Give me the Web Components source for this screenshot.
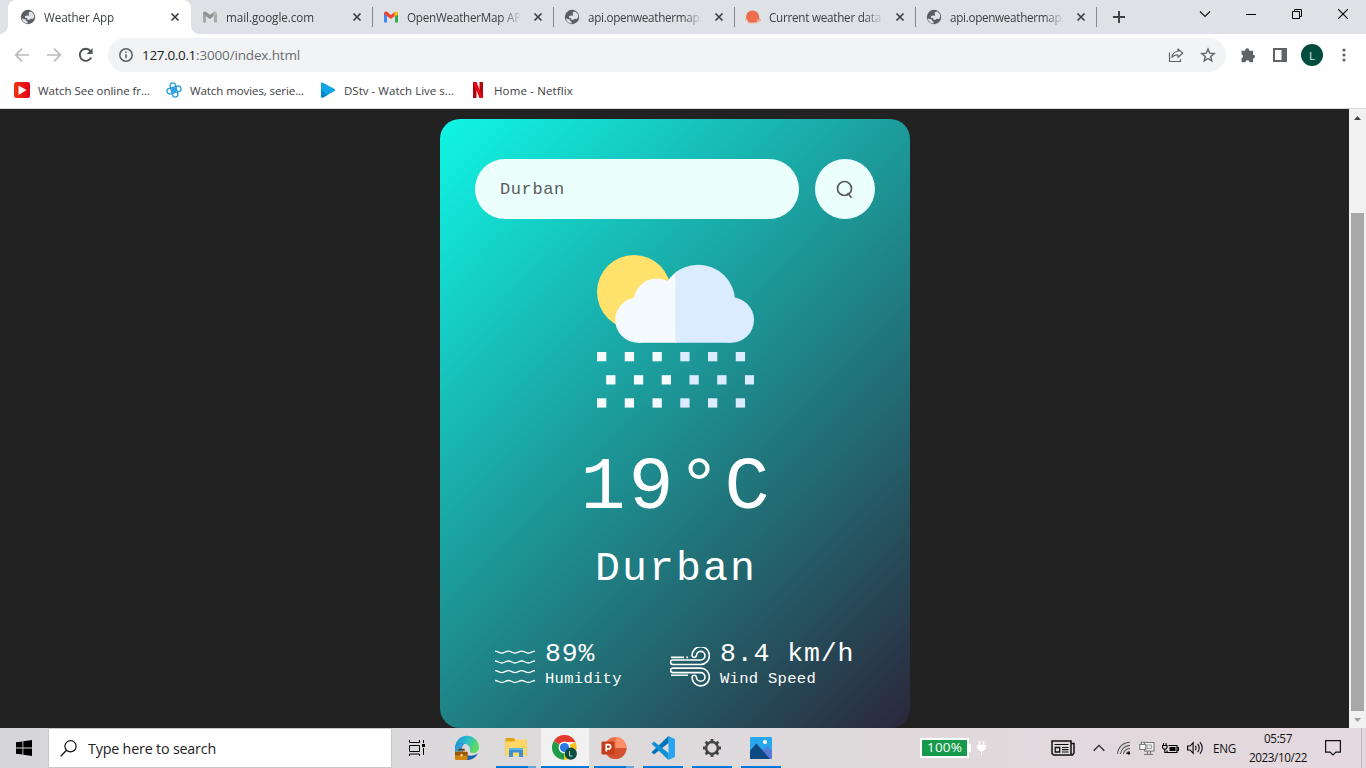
<!DOCTYPE html>
<html lang="en"><head><meta charset="utf-8"><title>Weather App</title>
<style>
html,body{margin:0;height:100%;overflow:hidden;background:#222}
body{font-family:"Open Sans","Noto Sans",sans-serif}
</style></head><body>
<desktop-screen></desktop-screen>
<script>
const def=(name,html,after)=>customElements.define(name,class extends HTMLElement{
  connectedCallback(){
    if(!this.shadowRoot){
      const t=document.createElement('template');
      t.innerHTML=typeof html==='function'?html(this):html;
      this.attachShadow({mode:'open'}).append(document.importNode(t.content,true));
    }
    if(after)after(this);
  }
});

const globe='<circle cx="8" cy="8" r="7.2" fill="#5a5e63"/><path d="M1.6 9.6c2 .2 2.7 1 4.300 .9l.2 1.300 1.600 1.200-.2 1.500c-3-.2-5.100-2-5.900-4.900zM8.700 3.200l2.300-.7c1.900 1 3.200 2.800 3.300 5.200l-1.300 2.200-2.500-.2-1.300 1.300-1.800-.2-.3-1.500-2.200-.6.2-1.800 2.200-.4 1.900.2-.4-1.300z" fill="#dfe2e6"/>';
const ICONS={
globe:[16,16,globe],
gmail:[16,16,'<path d="M1 4v9.500h3V7z" fill="#4285f4"/><path d="M12 7v6.500h3V4z" fill="#34a853"/><path d="M1 4.500C1 2.600 3 2 4.300 3L8 6l3.700-3v4L8 10 1 5z" fill="#ea4335"/><path d="M11.700 3C13 2 15 2.600 15 4.500V5.500l-3.300 2.300z" fill="#fbbc04"/>'],
gmailgray:[16,16,'<path d="M1 4v9.500h3V7z" fill="#a5a8a9"/><path d="M12 7v6.500h3V4z" fill="#aaa"/><path d="M1 4.500C1 2.600 3 2 4.300 3L8 6l3.700-3v4L8 10 1 5z" fill="#8f9191"/><path d="M11.700 3C13 2 15 2.600 15 4.500V5.500l-3.300 2.300z" fill="#b7b8b8"/>'],
owm:[16,16,'<path d="M1 8.500C1 4.500 3.500 1.600 7.500 1.600S14 4.500 14.200 8.500l-1 3-1.700 1.700H3.500L2 11z" fill="#ec6e4c"/><path d="M.3 10.200l2.500.8M3.500 13.600h8.500M11.500 11.500h1.500l1.200 1.500M14 9l1.600 3" fill="none" stroke="#f09c80" stroke-width="1.300"/>'],
close:[10,10,'<path d="M1.500 1.500l7 7M8.500 1.500l-7 7" stroke="#3c4043" stroke-width="1.700"/>'],
plus:[14,14,'<path d="M7 1v12M1 7h12" stroke="#3c4043" stroke-width="1.900"/>'],
down:[12,8,'<path d="M1 1.500l5 5 5-5" fill="none" stroke="#111" stroke-width="1.100"/>'],
min:[10,10,'<path d="M0 5.500h10" stroke="#000"/>'],
restore:[10,10,'<path d="M.5 2.500h7v7h-7zM2.500 2.500v-2h7v7h-2" fill="none" stroke="#000"/>'],
winx:[10,10,'<path d="M0 0l10 10M10 0L0 10" stroke="#000" stroke-width="1.100"/>'],
back:[16,16,'<path d="M15 8H2M8 1.700L1.700 8 8 14.300" fill="none" stroke="#b8babd" stroke-width="1.700"/>'],
fwd:[16,16,'<path d="M1 8h13M8 1.700L14.300 8 8 14.300" fill="none" stroke="#b8babd" stroke-width="1.700"/>'],
reload:[16,16,'<path d="M13.200 10.500A6 6 0 1 1 12.300 3.800L13.600 5" fill="none" stroke="#505458" stroke-width="1.900"/><path d="M14.600 1v6H8.600z" fill="#505458"/>'],
info:[16,16,'<circle cx="8" cy="8" r="6.200" fill="none" stroke="#5a5e63" stroke-width="1.500"/><path d="M8 7.200v4M8 4.500v1.500" stroke="#5a5e63" stroke-width="1.500"/>'],
share:[16,16,'<path d="M1.500 5.500v9h11v-2.300" fill="none" stroke="#5f6368" stroke-width="1.200"/><path d="M4 10.500c.4-4 3-6 6-6V2l4.700 4.200L10 10.300V8c-2.500-.2-4.600.5-6 2.500z" fill="none" stroke="#5f6368" stroke-width="1.200" stroke-linejoin="round"/>'],
star:[16,16,'<path d="M8 2l1.700 4.200 4.500.3-3.500 2.900 1.100 4.500L8 11.500l-3.800 2.400 1.100-4.500-3.500-2.900 4.500-.3z" fill="none" stroke="#5f6368" stroke-width="1.400"/>'],
puzzle:[16,16,'<path d="M1.500 3.800h3.800a2 2 0 1 1 3.800 0h4v3.900a1.900 1.900 0 1 1 0 3.800v3.700H9.500a2 2 0 0 0-4 0h-4v-4a2 2 0 0 0 0-3.900z" fill="#5f6368"/>'],
panel:[14,14,'<path d="M0 0h14v14H0zM2 2v10h6.500V2z" fill="#5f6368" fill-rule="evenodd"/>'],
dots:[4,14,'<g fill="#5f6368"><circle cx="2" cy="2" r="1.600"/><circle cx="2" cy="7" r="1.600"/><circle cx="2" cy="12" r="1.600"/></g>'],
play:[16,16,'<defs><linearGradient id="r"><stop stop-color="#f0320f"/><stop offset="1" stop-color="#e4001b"/></linearGradient></defs><rect width="16" height="16" rx="2.500" fill="url(#r)"/><path d="M4.500 3.500L12.500 8l-8 5z" fill="#fff"/>'],
knot:[16,16,'<g fill="none" stroke="#2a9de0" stroke-width="1.400" transform="rotate(-12 8 8)"><rect x="5" y=".8" width="5.600" height="8.400" rx="2.800"/><rect x="5.400" y="6.800" width="5.600" height="8.400" rx="2.800"/><rect x=".8" y="5.400" width="8.400" height="5.600" rx="2.800"/><rect x="6.800" y="5" width="8.400" height="5.600" rx="2.800"/></g>'],
dstv:[16,16,'<path d="M1 1.500C1 .3 2 .3 3 .700l11.500 6.300c1 .6 1 1.300 0 2L3 15.500c-1 .4-2 .2-2-1z" fill="#10a4e4"/><path d="M1 14V8l7 4.700-5 2.800c-1 .4-2 0-2-1.500z" fill="#0789c9"/>'],
netflix:[16,16,'<path d="M3 0h3.500v16H3zM9.500 0H13v16H9.500z" fill="#b1060f"/><path d="M3 0h3.500L13 16H9.500z" fill="#e50914"/>'],
search:[18,19,'<circle cx="8.500" cy="8.500" r="7" fill="none" stroke="#5a5a5a" stroke-width="1.700"/><path d="M11.500 13l4.200 4.700" stroke="#5a5a5a" stroke-width="1.700"/>'],
win:[16,16,'<path d="M0 2.300l6.500-.9v6.200H0zM7.300 1.200L16 0v7.600H7.300zM0 8.400h6.500v6.200L0 13.700zM7.300 8.400H16V16l-8.700-1.200z" fill="#000"/>'],
find:[17,17,'<circle cx="10.500" cy="6.300" r="5.600" fill="none" stroke="#111" stroke-width="1.200"/><path d="M6.500 10.300L.7 16.200" stroke="#111" stroke-width="1.300"/>'],
taskview:[16,16,'<path d="M.5 0v2.500h10V0M.5 5.500h10v6H.5zM.5 16v-2h10v2M14.500 0v3M14.500 8v7" fill="none" stroke="#000"/><path d="M13 4h3v3h-3z"/>'],
edge:[26,26,'<defs><linearGradient id="e" y2=".4"><stop stop-color="#1b86d0"/><stop offset=".5" stop-color="#29bdd2"/><stop offset="1" stop-color="#5edb62"/></linearGradient></defs><path d="M1 13a12 12 0 0 1 24-.5c0 3.500-3 5.500-6 5.500-2.500 0-3.500-1-3-2.500C17 12 13 8 8 9c-3 .5-6 2.500-7 4z" fill="url(#e)"/><path d="M1 14c0-4 5-7 9.500-5.500C6 11 8 18 13 20c4 1.500 8 .5 11-2-2 4.500-6 7-11 7C6 25 1 20 1 14z" fill="#1764ad"/><path d="M1 14c1-5 6-7 10-5.500-3 1.500-4 5-2 8L1.500 18z" fill="#2d9ddd"/><rect x="1" y="16.500" width="12.500" height="8.500" rx="1" fill="#cf850d"/><path d="M1 17h12.500v3.500H1z" fill="#9a570c"/><path d="M5 16v-1.500h5V16" fill="none" stroke="#6e3b0a" stroke-width="1.300"/><path d="M6.500 19h2v2.500h-2z" fill="#ffe194"/>'],
folder:[24,22,'<path d="M1.500 2.500C1.500 1 2 1 3 1h7l1.500 2H22.500v16H1.500z" fill="#e2a316"/><path d="M1.500 4.500h8.500l2-2h10.500V19h-21z" fill="#ffd765"/><path d="M5 11h14v9h-4v-4.500H9V20H5z" fill="#3c91d5"/><path d="M5 11h14v2H5z" fill="#64b2ea"/>'],
chrome:[26,26,'<path d="M12.500 12.500L1.700 6.200A12.300 12.300 0 0 1 23.500 7H12.500z" fill="#e33b2e"/><path d="M12.500 12.500L23.400 7A12.300 12.300 0 0 1 12 24.800z" fill="#fbc116"/><path d="M12.500 12.500L12 24.800A12.300 12.300 0 0 1 1.700 6.200z" fill="#229b49"/><circle cx="12.500" cy="12.500" r="5.900" fill="#fff"/><circle cx="12.500" cy="12.500" r="4.600" fill="#2878e8"/><circle cx="18.800" cy="18.700" r="6.100" fill="#0a4c40"/><path d="M17.500 16v5h3" stroke="#b5cec6" fill="none"/>'],
ppt:[26,24,'<circle cx="14.500" cy="12" r="11" fill="#ed6c47"/><path d="M14.500 1a11 11 0 0 1 11 11h-11z" fill="#ff8f6b"/><path d="M3.500 12h22a11 11 0 0 1-22 0z" fill="#d35230"/><rect x=".5" y="5.500" width="13" height="13" rx="1" fill="#c43e1c"/><path d="M5.300 15.500V8.700h2.300a2 2 0 0 1 0 4.200H5.300" stroke="#fff" stroke-width="1.700" fill="none"/>'],
code:[26,26,'<path d="M18.500 1L25 4v18l-6.500 3z" fill="#27a5ee"/><path d="M18.500 1v7L4 19.500l-2.500-2.300z" fill="#0072b8"/><path d="M18.500 25v-7L4 6.500 1.500 8.800z" fill="#1190d8"/>'],
gear:[20,20,'<circle cx="10" cy="10" r="5.900" fill="none" stroke="#444" stroke-width="2.500"/><g stroke="#444" stroke-width="2.800"><path d="M10 1v3M10 16v3M1 10h3M16 10h3M3.640 3.640l2.100 2.100M14.260 14.260l2.100 2.100M3.640 16.360l2.100-2.100M14.260 5.740l2.100-2.100"/></g>'],
photo:[22,22,'<rect width="22" height="22" rx="1" fill="#29a7ec"/><path d="M11 22l-2-6 8.500-6.500L22 13.500V22z" fill="#5a7ad8"/><path d="M0 13.500L6.500 6.500 20 22H0z" fill="#104a85"/><circle cx="15" cy="5" r="2.100" fill="#fff"/>'],
plug:[10,16,'<path d="M2.500 1v4M6.500 1v4" stroke="#fff" stroke-width="1.500"/><path d="M0 5h9v3L6.500 11H5v4H4v-4H2.500L0 8z" fill="#fff"/>'],
news:[24,16,'<path d="M1 1h19v14H2.500L1 13.500zM20 3.500h3V13l-1.500 2H19" fill="none" stroke="#111" stroke-width="1.500"/><path d="M3.500 4.500h14M11 7.500h6.500M11 9.700h6.500M11 12h6.500" stroke="#111" stroke-width="1.200"/><path d="M4.200 7.500h4.500v4.500H4.200z" fill="none" stroke="#111" stroke-width="1.300"/>'],
up:[12,8,'<path d="M.7 6.700L6 1.400l5.300 5.300" fill="none" stroke="#222" stroke-width="1.300"/>'],
wifi:[14,14,'<g fill="none" stroke="#555" stroke-width="1.100"><path d="M.6 13C1 6 6 1.500 13 1.200M3.500 13C4 8 8 4.600 13 4.400M6.500 13c.3-3 3-5.300 6.500-5.500M9.300 13c.4-1.500 1.700-2.400 3.700-2.500"/></g><circle cx="11.700" cy="12.300" r="1.400"/>'],
pc:[16,15,'<path d="M5.500 1.500h9.500v8.500H5.500zM8.500 10v3M11.500 10v3M5 13.500h9" fill="#f7f3f5" stroke="#777" stroke-width="1.100"/><path d="M8 4h4.500v3.500H8z" fill="#eee" stroke="#888" stroke-width=".8"/><path d="M.8 3.500h6v5h-6zM2.300 3.500V1.200h3v2.300" fill="#fff" stroke="#777" stroke-width="1.100"/>'],
batt:[17,13,'<path d="M6.500 3.500h8.500v7H5V8.500M15.500 5.500h1v3h-1" fill="none" stroke="#000" stroke-width="1.200"/><path d="M7.500 5h6v4h-6z"/><path d="M1.500 1v2M4 1v2M.5 3.500h4.500v2L4 7H1.500L.5 5.500zM2.800 7v3.500h2" fill="none" stroke="#000" stroke-width="1.100"/>'],
sound:[17,14,'<path d="M.6 5h2.500l3-3.300v10.600L3.100 9H.6z" fill="none" stroke="#000" stroke-width="1.100"/><path d="M8.300 4.800q1.500 2.200 0 4.400M10.700 2.900q3 4.100 0 8.200M13 1.200q4.500 5.800 0 11.600" fill="none" stroke="#111" stroke-width="1.100"/>'],
note:[16,16,'<path d="M.6 .6h14.800v11.500h-4.500L8 15l-2.900-2.900H.6z" fill="none" stroke="#111" stroke-width="1.200"/>'],
arrowup:[7,4,'<path d="M3.500 0L7 4H0z" fill="#444"/>'],
arrowdown:[7,4,'<path d="M3.500 4L7 0H0z" fill="#a0a0a0"/>'],
wave:[40,36,(()=>{let s='';for(const y of[3.3,13.2,22.800,32.700])s+=`<path d="M0 ${y-1.200}c3 0 4 2 6.700 2s4-2 6.700-2 4 2 6.600 2 4-2 6.700-2 4 2 6.600 2 4-2 6.700-2" fill="none" stroke="#fff" stroke-width="1.300"/>`;return s})()],
wind:[40,40,'<g fill="none" stroke="#fff" stroke-width="1.600"><path id="w" d="M2.800 13H30.700A4.300 4.300 0 1 0 26.400 8.700A2.300 2.300 0 0 1 22 8.700A8.700 8.900 0 1 1 30.700 17.500H2.800A2.200 2.200 0 0 1 2.800 13z"/><use href="#w" transform="matrix(1 0 0 -1 0 38.600)"/><path d="M1 10.400h13M16.300 10.400h1.800M1 28.200h17"/></g>'],
};
def('ui-icon',el=>{const[w,h,b]=ICONS[el.getAttribute('name')];
  return `<style>:host{display:block;flex:none;width:${w}px;height:${h}px}svg{display:block}</style><svg width="${w}" height="${h}" viewBox="0 0 ${w} ${h}">${b}</svg>`});

/* Text whose letter spacing is adjusted so that the run takes a given width. */
def('fit-text','<style>:host{display:block;white-space:pre}span{display:inline-block}</style><span><slot></slot></span>',el=>{
  const s=el.shadowRoot.querySelector('span'),w=+el.getAttribute('w'),n=el.textContent.length;
  if(w)s.style.letterSpacing=((w-s.getBoundingClientRect().width)/n)+'px';
});

def('browser-tab',el=>`<style>
:host{display:block;width:181px;height:34px;color:#3c4043}
:host([active]){width:183px;background:#fff;border-radius:8px 8px 0 0;position:relative}
:host([active])::before,:host([active])::after{content:"";position:absolute;bottom:0;width:8px;height:8px}
:host([active])::before{left:-8px;background:radial-gradient(circle at 0 0,transparent 7.5px,#fff 8px)}
:host([active])::after{right:-8px;background:radial-gradient(circle at 100% 0,transparent 7.5px,#fff 8px)}
.r{display:flex;align-items:center;height:34px;padding-left:11px;box-sizing:border-box;font-size:11.7px}
:host([active]) .r{padding-left:12px}
.t{margin-left:8px;width:115px;height:18px;line-height:18px;overflow:hidden;-webkit-mask:linear-gradient(90deg,#000 82%,transparent);mask:linear-gradient(90deg,#000 82%,transparent)}
ui-icon:nth-of-type(2){margin-left:11px}
i{width:1px;height:20px;background:#85888d;margin-left:auto;margin-right:-1px}
</style><div class="r"><ui-icon name="${el.getAttribute('icon')}"></ui-icon><div class="t"><fit-text w="${el.getAttribute('w')}">${el.getAttribute('label')}</fit-text></div><ui-icon name="close"></ui-icon>${el.hasAttribute('line')?'<i></i>':''}</div>`);

def('tab-strip',`<style>
:host{display:flex;height:34px;background:#dee1e6;padding-left:8px;box-sizing:border-box}
browser-tab:nth-of-type(n+3){--s:1px}
.p{display:grid;place-items:center;width:45px}
.c{display:flex;margin-left:auto;height:28px}.c div{width:46px;display:grid;place-items:center}
</style>
<browser-tab active icon="globe" w="70" label="Weather App"></browser-tab>
<browser-tab icon="gmailgray" w="88" label="mail.google.com" line></browser-tab>
<browser-tab icon="gmail" w="114" label="OpenWeatherMap AP" line></browser-tab>
<browser-tab icon="globe" w="114" label="api.openweathermap." line></browser-tab>
<browser-tab icon="owm" w="112" label="Current weather data" line></browser-tab>
<browser-tab icon="globe" w="114" label="api.openweathermap." line></browser-tab>
<div class="p"><ui-icon name="plus"></ui-icon></div>
<div class="c"><div><ui-icon name="down"></ui-icon></div><div><ui-icon name="min"></ui-icon></div><div><ui-icon name="restore"></ui-icon></div><div><ui-icon name="winx"></ui-icon></div></div>`);

def('tool-bar',`<style>
:host{display:flex;align-items:center;height:42px;box-sizing:border-box;padding:4px 0 4px 14px;background:#fff}
.n{display:flex;gap:16px;width:94px}
.o{display:flex;align-items:center;width:1118px;height:34px;border-radius:17px;background:#f1f3f4;box-sizing:border-box;padding:0 10px;font-size:13.500px;color:#6a6e73}
.u{display:flex;margin-left:8px;margin-right:auto;line-height:18px}.u :first-child{color:#202124}
.o ui-icon:last-child{margin-left:16px}
.x{display:flex;align-items:center;margin-left:14px}
b{display:grid;place-items:center;width:22px;height:22px;border-radius:50%;background:#004d40;color:#d9eae5;font-size:11.500px;font-weight:400;margin:0 19px 0 14px}
.x ui-icon:nth-child(2){margin-left:17px}
</style>
<div class="n"><ui-icon name="back"></ui-icon><ui-icon name="fwd"></ui-icon><ui-icon name="reload"></ui-icon></div>
<div class="o"><ui-icon name="info"></ui-icon><div class="u"><fit-text w="54">127.0.0.1</fit-text><fit-text w="104">:3000/index.html</fit-text></div><ui-icon name="share"></ui-icon><ui-icon name="star"></ui-icon></div>
<div class="x"><ui-icon name="puzzle"></ui-icon><ui-icon name="panel"></ui-icon><b>L</b><ui-icon name="dots"></ui-icon></div>`);

def('book-mark',el=>`<style>:host{display:flex;align-items:center;gap:8px;color:#3c4043;font-size:11.500px}</style><ui-icon name="${el.getAttribute('icon')}"></ui-icon><fit-text w="${el.getAttribute('w')}">${el.getAttribute('label')}</fit-text>`);
def('bookmark-bar',`<style>:host{display:flex;align-items:center;gap:16px;padding:0 0 4px 14px;background:#fff;border-bottom:1px solid #d4d6d9;box-sizing:border-box;height:33px}</style>
<book-mark icon="play" w="112" label="Watch See online fr..."></book-mark><book-mark icon="knot" w="114" label="Watch movies, serie..."></book-mark><book-mark icon="dstv" w="110" label="DStv - Watch Live s..."></book-mark><book-mark icon="netflix" w="79" label="Home - Netflix"></book-mark>`);

def('weather-art',()=>{let d='';
  [[0,97],[9.200,120.200],[0,143.300]].forEach(([x0,y])=>{for(let i=0;i<6;i++)d+=`<rect x="${x0+i*27.750}" y="${y}" width="9.300" height="9.300" fill="${i<3?'#f5fafe':'#daecfe'}"/>`});
  const c='<circle cx="41" cy="65" r="22.800"/><circle cx="59.700" cy="46.500" r="23"/><circle cx="101.200" cy="46.700" r="37"/><circle cx="134.200" cy="65" r="22.800"/><path d="M41 46h93v41.800H41z"/>';
  return `<style>:host{display:block;width:157px;height:153px}svg{display:block}</style><svg width="157" height="153"><defs><clipPath id="r"><path d="M78.500 0H160v100H78.500z"/></clipPath></defs><circle cx="37" cy="37" r="37" fill="#ffe26c"/><g fill="#f5fafe"><circle cx="41" cy="65" r="22.800"/><circle cx="59.700" cy="46.500" r="23"/><path d="M64.200 46.700A37 37 0 0 1 80 16.400V87.800H41V46z"/></g><g fill="#daecfe" clip-path="url(#r)">${c}</g>${d}</svg>`});

def('weather-stat',`<style>:host{display:flex;align-items:center;color:#fff;width:175px}
.x{margin-top:7px}.y{margin-left:10px}.v{font-size:26.500px;letter-spacing:.9px;line-height:32px;white-space:nowrap}.k{font-size:15.500px;letter-spacing:.3px;line-height:18px;white-space:nowrap}</style><div class="x"><slot name="icon"></slot></div><div class="y"><div class="v"><slot name="value"></slot></div><div class="k"><slot></slot></div></div>`);

def('weather-card',`<style>
:host{display:flex;flex-direction:column;align-items:center;width:470px;height:609px;box-sizing:border-box;padding:40px 35px 0;border-radius:20px;background:linear-gradient(135deg,#10f6e6,#2b273b);color:#fff;font-family:"Courier New","Liberation Mono",monospace}
.s{display:flex;justify-content:space-between;width:400px;height:60px}
.i{width:324px;border-radius:30px;background:#ebfffc;color:#5c5c5c;font-size:17px;letter-spacing:.6px;line-height:61px;padding-left:25px;box-sizing:border-box}
.b{width:60px;border-radius:50%;background:#ebfffc;display:grid;place-items:center}
weather-art{margin-top:36px}
.t{font-size:75px;letter-spacing:3px;text-indent:3px;line-height:91px;margin-top:35px}.c{font-size:41.500px;letter-spacing:2.100px;text-indent:2px;line-height:51px;margin-top:9px}
.d{display:flex;width:360px;margin-top:44px}
</style>
<div class="s"><div class="i">Durban</div><div class="b"><ui-icon name="search"></ui-icon></div></div>
<weather-art></weather-art><div class="t">19°C</div><div class="c">Durban</div>
<div class="d"><weather-stat><ui-icon slot="icon" name="wave"></ui-icon><span slot="value">89%</span>Humidity</weather-stat><weather-stat><ui-icon slot="icon" name="wind"></ui-icon><span slot="value">8.4 km/h</span>Wind Speed</weather-stat></div>`);

def('scroll-bar',`<style>:host{display:flex;flex-direction:column;align-items:center;width:17px;background:#f1f1f1}
div{height:17px;display:grid;place-items:center}i{width:13px;height:498px;background:#a8a8a8;margin:87px 0 0}</style><div><ui-icon name="arrowup"></ui-icon></div><i></i><div><ui-icon name="arrowdown"></ui-icon></div>`);

def('task-app',el=>`<style>:host{display:grid;place-items:center;width:48px;height:40px;position:relative}
:host([on]){background:#f2f1f2}
i{position:absolute;bottom:0;left:4px;width:40px;height:2px;background:#0078d7}
:host([on]) i{left:0;width:48px}:host([multi]) i{background:linear-gradient(90deg,#0078d7 32px,#5fa5dc 32px)}</style><ui-icon name="${el.getAttribute('icon')}"></ui-icon>${el.hasAttribute('run')?'<i></i>':''}`);

def('task-bar',`<style>
:host{display:flex;height:40px;background:linear-gradient(90deg,#d6d6d8,#dddadc 40%,#dfd9dc 65%,#e4d9de);color:#111}
.g{display:grid;place-items:center;height:40px}
.q{display:flex;align-items:center;width:344px;height:40px;background:#fff;border:1px solid #c8c8c8;box-sizing:border-box;padding-left:11px;font-size:14.300px;color:#222}
.q fit-text{margin-left:11px}
.a{display:flex;gap:1px;margin-left:1px}
.b{display:flex;align-items:center;width:120px;margin-left:135px}
.p{width:49px;height:20px;box-sizing:border-box;border:2px solid #fff;background:#159a4b;color:#fff;font-size:13.500px;line-height:15px;padding-left:5px}
.z{width:2px;height:8px;background:#fff;margin-right:6px}
.k{font-size:11.700px;line-height:18px;padding-bottom:2px;box-sizing:border-box}
.e{width:1px;background:#bdb5b9;margin-left:9px}
</style>
<div class="g" style="width:48px"><ui-icon name="win"></ui-icon></div>
<div class="q"><ui-icon name="find"></ui-icon><fit-text w="128">Type here to search</fit-text></div>
<div class="g" style="width:50px"><ui-icon name="taskview"></ui-icon></div>
<div class="a"><task-app icon="edge"></task-app><task-app icon="folder" run multi></task-app><task-app icon="chrome" on run></task-app><task-app icon="ppt" run multi></task-app><task-app icon="code" run></task-app><task-app icon="gear" run></task-app><task-app icon="photo" run></task-app></div>
<div class="b"><div class="p"><fit-text w="35">100%</fit-text></div><div class="z"></div><ui-icon name="plug"></ui-icon></div>
<div class="g" style="width:46px"><ui-icon name="news"></ui-icon></div>
<div class="g" style="width:25px"><ui-icon name="up"></ui-icon></div>
<div class="g" style="width:25px"><ui-icon name="wifi"></ui-icon></div>
<div class="g" style="width:22px"><ui-icon name="pc"></ui-icon></div>
<div class="g" style="width:25px"><ui-icon name="batt"></ui-icon></div>
<div class="g" style="width:24px"><ui-icon name="sound"></ui-icon></div>
<div class="g" style="width:35px;font-size:11.700px"><fit-text w="23">ENG</fit-text></div>
<div class="g k" style="width:72px"><fit-text w="28">05:57</fit-text><fit-text w="58">2023/10/22</fit-text></div>
<div class="g" style="width:38px"><ui-icon name="note"></ui-icon></div><div class="e"></div>`);

def('desktop-screen',`<style>:host{display:flex;flex-direction:column;width:1366px;height:768px;overflow:hidden}
.v{display:flex;height:619px}.m{width:1349px;background:#222;box-sizing:border-box;padding:10px 0 0 440px}</style>
<tab-strip></tab-strip><tool-bar></tool-bar><bookmark-bar></bookmark-bar>
<div class="v"><div class="m"><weather-card></weather-card></div><scroll-bar></scroll-bar></div><task-bar></task-bar>`);
</script></body></html>
